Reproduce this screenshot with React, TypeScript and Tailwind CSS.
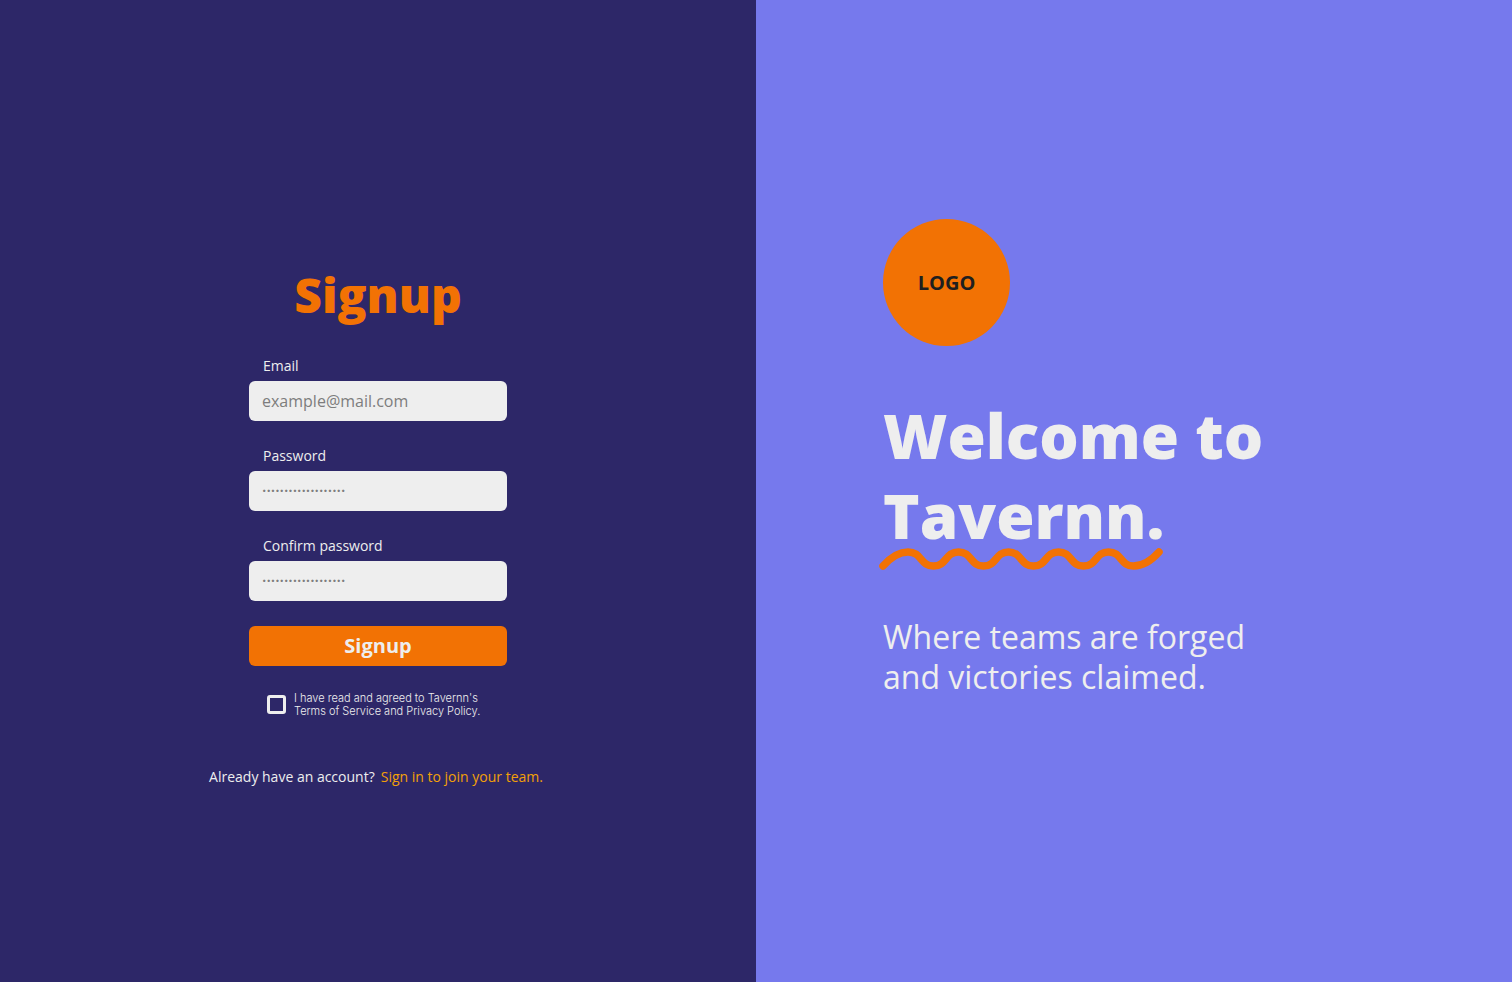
import React from "react";

type FieldProps = {
  id: string;
  label: string;
  type: string;
  placeholder: string;
};

function Field({ id, label, type, placeholder }: FieldProps) {
  return (
    <div className="flex flex-col gap-[3px]">
      <label htmlFor={id} className="pl-3.5 text-sm leading-6 font-medium">
        {label}
      </label>
      <input
        id={id}
        type={type}
        placeholder={placeholder}
        className={
          type === "password"
            ? "h-10 w-full rounded-md bg-[#eeeeee] px-[13px] text-base font-semibold text-[#1f1f1f] placeholder:text-[#7d7d7d] placeholder:opacity-100"
            : "h-10 w-full rounded-md bg-[#eeeeee] px-[13px] text-base font-medium text-[#1f1f1f] placeholder:text-[#7d7d7d] placeholder:opacity-100"
        }
      />
    </div>
  );
}

function Squiggle() {
  return (
    <svg
      viewBox="0 0 284 22"
      className="absolute top-full -left-1 -mt-[7px] h-[22px] w-[284px]"
      fill="none"
      aria-hidden="true"
    >
      <path
        d="M4 18C12 9 20 4 29 4C43 4 41 18 54.5 18S66 4 79.5 4S91 18 104.500 18S116 4 129.500 4S141 18 154.500 18S166 4 179.500 4S191 18 204.500 18S216 4 229.500 4S241 18 254.500 18C263 18 272 13 280 4"
        stroke="#f27204"
        strokeWidth="7.5"
        strokeLinecap="round"
        strokeLinejoin="round"
      />
    </svg>
  );
}

export default function App() {
  return (
    <main className="grid min-h-screen grid-cols-2 font-['Open_Sans',sans-serif] text-[#eeeeee]">
      <section className="flex flex-col items-center justify-center bg-[#2d2768] pt-[69px]">
        <h1 className="text-5xl leading-16 font-extrabold text-[#f27204]">Signup</h1>

        <form className="mt-[27px] flex w-[258px] flex-col gap-[23px]" onSubmit={(e) => e.preventDefault()}>
          <Field id="email" label="Email" type="email" placeholder="example@mail.com" />
          <Field id="password" label="Password" type="password" placeholder="···················" />
          <Field id="confirm" label="Confirm password" type="password" placeholder="···················" />

          <button type="submit" className="mt-0.5 h-10 rounded-md bg-[#f27204] pt-px text-xl font-bold">
            Signup
          </button>

          <div className="mt-[3px] flex items-center gap-2 pl-[18px] font-['Inter',sans-serif] text-[11px] leading-[13px] font-light">
            <input
              id="terms"
              type="checkbox"
              className="size-[19px] shrink-0 appearance-none rounded-[3px] border-3 border-[#eeeeee] checked:bg-[#f27204]"
            />
            <label htmlFor="terms" className="whitespace-nowrap">
              I have read and agreed to Tavernn's
              <br />
              Terms of Service and Privacy Policy.
            </label>
          </div>
        </form>

        <p className="mt-[47px] flex gap-1.5 pr-1 text-sm leading-6 font-medium">
          <span>Already have an account?</span>
          <a href="#signin" className="text-[#f2a007]">
            Sign in to join your team.
          </a>
        </p>
      </section>

      <section className="flex flex-col items-start justify-center bg-[#7679ed] pb-[67px] pl-[127px]">
        <div className="flex size-[127px] items-center justify-center rounded-full bg-[#f27204] pt-px text-xl font-bold text-[#1f1f1f]">
          LOGO
        </div>
        <h2 className="mt-[49px] text-[62px] leading-20 font-extrabold">
          Welcome to
          <br />
          <span className="relative inline-block">
            Tavernn.
            <Squiggle />
          </span>
        </h2>
        <p className="mt-[62px] text-[32px] leading-10 font-normal">
          Where teams are forged
          <br />
          and victories claimed.
        </p>
      </section>
    </main>
  );
}
